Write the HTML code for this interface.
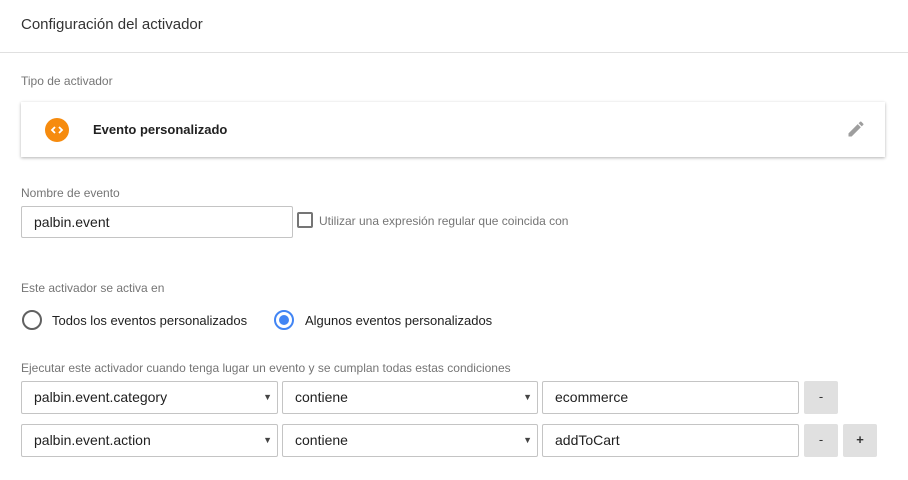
<html><head><style>
body{margin:0;width:908px;height:480px;background:#fff;font-family:"Liberation Sans",sans-serif;position:relative;overflow:hidden;color:#212121}
.a{position:absolute}
.lbl{font-size:12px;color:#757575}
.box{position:absolute;border:1px solid #c4c4c4;border-radius:2px;box-sizing:border-box;font-size:14px;padding-left:12px;line-height:30px;background:#fff}
.sel::after{content:"▼";position:absolute;right:5px;top:0;font-size:9px;color:#444}
.btn{position:absolute;background:#e0e0e0;border-radius:2px;width:34px;height:33px;text-align:center;line-height:31px;font-size:13px;color:#333}
</style></head><body>
<div class="a" style="left:21px;top:16px;font-size:15px;color:#333">Configuración del activador</div>
<div class="a" style="left:0;top:52px;width:908px;height:1px;background:#e0e0e0"></div>
<div class="a lbl" style="left:21px;top:74px">Tipo de activador</div>
<div class="a" style="left:21px;top:102px;width:864px;height:55px;background:#fff;box-shadow:0 1px 3px rgba(0,0,0,.3)"></div>
<div class="a" style="left:45px;top:118px;width:24px;height:24px;border-radius:50%;background:#f68b0e"></div>
<svg class="a" style="left:45px;top:118px" width="24" height="24" viewBox="0 0 24 24"><path d="M10 9L7 12L10 15M14 9L17 12L14 15" stroke="#fff" stroke-width="1.8" fill="none"/></svg>
<div class="a" style="left:93px;top:122px;font-size:13px;font-weight:bold;color:#212121">Evento personalizado</div>
<svg class="a" style="left:846px;top:119px" width="20" height="20" viewBox="0 0 24 24"><path fill="#9e9e9e" d="M3 17.25V21h3.75L17.81 9.94l-3.75-3.75L3 17.25zM20.71 7.04a1 1 0 000-1.41l-2.34-2.34a1 1 0 00-1.41 0l-1.830 1.83 3.75 3.75 1.83-1.83z"/></svg>
<div class="a lbl" style="left:21px;top:186px">Nombre de evento</div>
<div class="box" style="left:21px;top:206px;width:272px;height:32px">palbin.event</div>
<div class="a" style="left:297px;top:212px;width:16px;height:16px;border:2px solid #757575;box-sizing:border-box;border-radius:2px"></div>
<div class="a lbl" style="left:319px;top:214px">Utilizar una expresión regular que coincida con</div>
<div class="a lbl" style="left:21px;top:281px">Este activador se activa en</div>
<div class="a" style="left:22px;top:310px;width:20px;height:20px;border:2px solid #616161;border-radius:50%;box-sizing:border-box"></div>
<div class="a" style="left:52px;top:313px;font-size:13px">Todos los eventos personalizados</div>
<div class="a" style="left:274px;top:310px;width:20px;height:20px;border:2px solid #4285f4;border-radius:50%;box-sizing:border-box"></div>
<div class="a" style="left:279px;top:315px;width:10px;height:10px;background:#4285f4;border-radius:50%"></div>
<div class="a" style="left:305px;top:313px;font-size:13px">Algunos eventos personalizados</div>
<div class="a lbl" style="left:21px;top:361px">Ejecutar este activador cuando tenga lugar un evento y se cumplan todas estas condiciones</div>
<div class="box sel" style="left:21px;top:381px;width:257px;height:33px">palbin.event.category</div>
<div class="box sel" style="left:282px;top:381px;width:256px;height:33px">contiene</div>
<div class="box" style="left:542px;top:381px;width:257px;height:33px">ecommerce</div>
<div class="btn" style="left:804px;top:381px">-</div>
<div class="box sel" style="left:21px;top:424px;width:257px;height:33px">palbin.event.action</div>
<div class="box sel" style="left:282px;top:424px;width:256px;height:33px">contiene</div>
<div class="box" style="left:542px;top:424px;width:257px;height:33px">addToCart</div>
<div class="btn" style="left:804px;top:424px">-</div>
<div class="btn" style="left:843px;top:424px;font-weight:bold">+</div>
</body></html>
